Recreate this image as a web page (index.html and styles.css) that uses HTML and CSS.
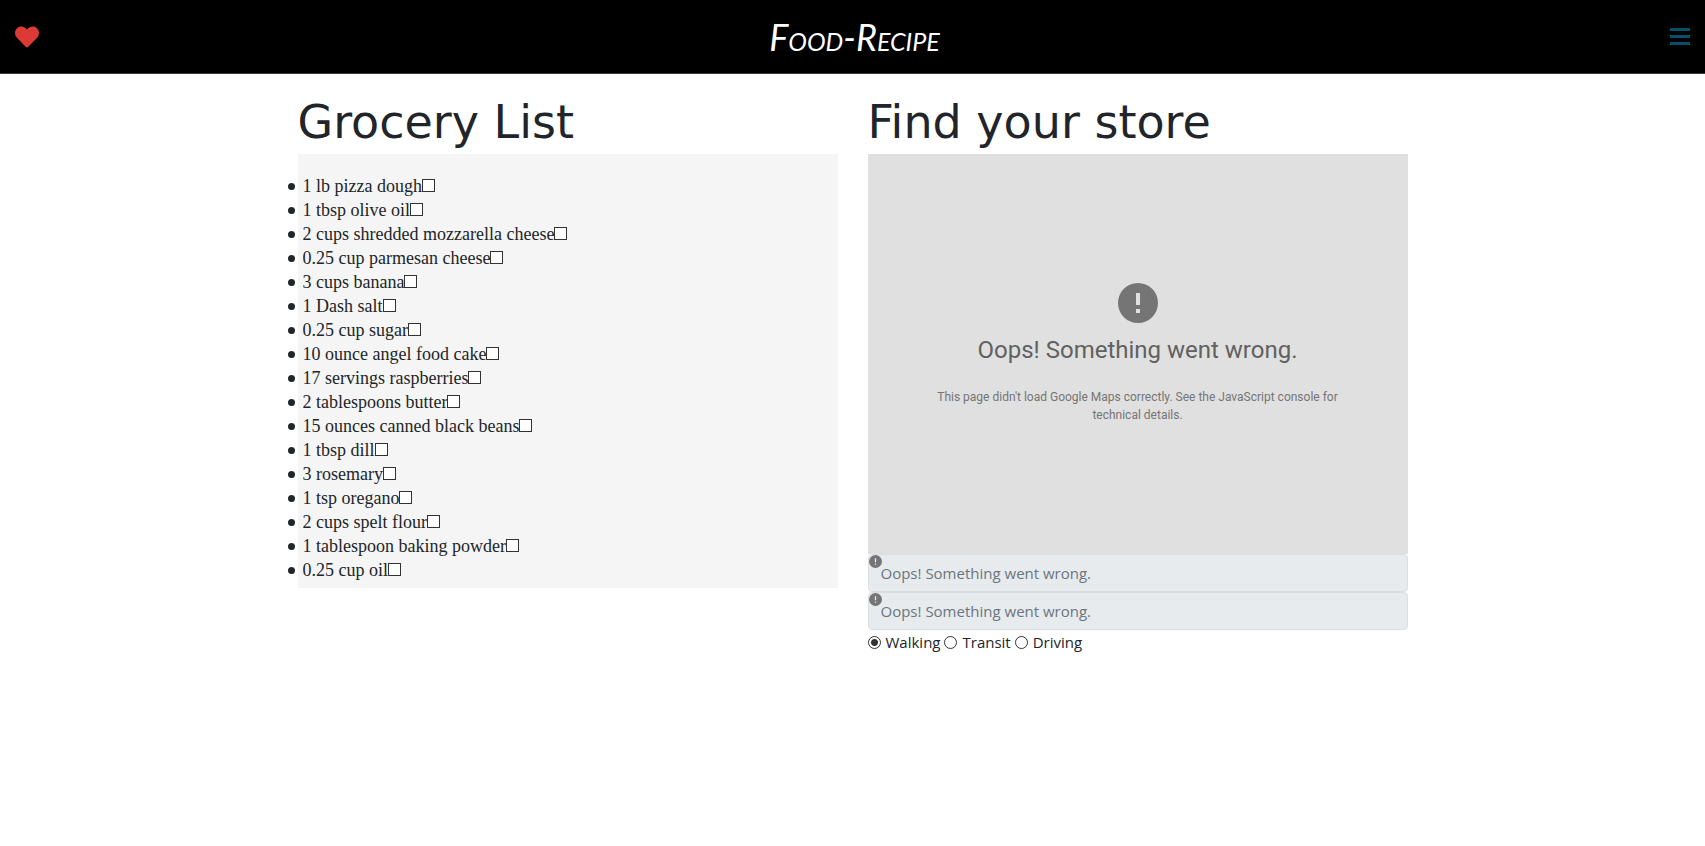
FILE: index.html
```
<!DOCTYPE html>
<html lang="en">
<head>
<meta charset="utf-8">
<meta name="viewport" content="width=device-width, initial-scale=1">
<title>Food-Recipe</title>
<link rel="stylesheet" href="styles.css">
</head>
<body>
<header class="navbar">
  <button class="icon-button" type="button" aria-label="Favorites">
    <svg class="heart" viewBox="0 0 512 512" aria-hidden="true"><path d="M462.3 62.6C407.5 15.9 326 24.3 275.7 76.2L256 96.5l-19.7-20.3C186.1 24.3 104.5 15.9 49.7 62.6c-62.8 53.6-66.1 149.8-9.9 207.9l193.5 199.8c12.5 12.9 32.8 12.9 45.3 0l193.5-199.8c56.3-58.1 53-154.3-9.8-207.9z"/></svg>
  </button>
  <a class="brand" href="#">Food-Recipe</a>
  <button class="icon-button" type="button" aria-label="Menu">
    <svg class="bars" viewBox="0 0 20 20" aria-hidden="true"><path d="M0 1h20v3H0zM0 8h20v3H0zM0 15h20v3H0z"/></svg>
  </button>
</header>
<main class="container">
  <section class="column">
    <h1 class="title">Grocery List</h1>
    <ul class="groceries">
      <li><label>1 lb pizza dough<input type="checkbox"></label></li>
      <li><label>1 tbsp olive oil<input type="checkbox"></label></li>
      <li><label>2 cups shredded mozzarella cheese<input type="checkbox"></label></li>
      <li><label>0.25 cup parmesan cheese<input type="checkbox"></label></li>
      <li><label>3 cups banana<input type="checkbox"></label></li>
      <li><label>1 Dash salt<input type="checkbox"></label></li>
      <li><label>0.25 cup sugar<input type="checkbox"></label></li>
      <li><label>10 ounce angel food cake<input type="checkbox"></label></li>
      <li><label>17 servings raspberries<input type="checkbox"></label></li>
      <li><label>2 tablespoons butter<input type="checkbox"></label></li>
      <li><label>15 ounces canned black beans<input type="checkbox"></label></li>
      <li><label>1 tbsp dill<input type="checkbox"></label></li>
      <li><label>3 rosemary<input type="checkbox"></label></li>
      <li><label>1 tsp oregano<input type="checkbox"></label></li>
      <li><label>2 cups spelt flour<input type="checkbox"></label></li>
      <li><label>1 tablespoon baking powder<input type="checkbox"></label></li>
      <li><label>0.25 cup oil<input type="checkbox"></label></li>
    </ul>
  </section>
  <section class="column">
    <h1 class="title">Find your store</h1>
    <div class="map">
      <svg class="map-icon" viewBox="0 0 40 40" aria-hidden="true"><path fill-rule="evenodd" d="M20 0a20 20 0 1 0 0 40a20 20 0 0 0 0-40zM18 10h4v12h-4zM18 26h4v4h-4z"/></svg>
      <div class="map-title">Oops! Something went wrong.</div>
      <div class="map-message">This page didn't load Google Maps correctly. See the JavaScript console for technical details.</div>
    </div>
    <div class="field">
      <input class="place" type="text" aria-label="Origin" placeholder="Oops! Something went wrong." disabled>
      <svg class="field-icon" viewBox="0 0 40 40" aria-hidden="true"><path fill-rule="evenodd" d="M20 0a20 20 0 1 0 0 40a20 20 0 0 0 0-40zM18 10h4v12h-4zM18 26h4v4h-4z"/></svg>
    </div>
    <div class="field">
      <input class="place" type="text" aria-label="Destination" placeholder="Oops! Something went wrong." disabled>
      <svg class="field-icon" viewBox="0 0 40 40" aria-hidden="true"><path fill-rule="evenodd" d="M20 0a20 20 0 1 0 0 40a20 20 0 0 0 0-40zM18 10h4v12h-4zM18 26h4v4h-4z"/></svg>
    </div>
    <div class="modes">
      <label><input type="radio" name="mode" checked>Walking</label>
      <label><input type="radio" name="mode">Transit</label>
      <label><input type="radio" name="mode">Driving</label>
    </div>
  </section>
</main>
</body>
</html>
```
FILE: styles.css
```
* { box-sizing: border-box; }
body {
  margin: 0;
  background: #fff;
  color: #212529;
  font: 15px/24px "Open Sans", sans-serif;
}
.navbar {
  display: flex;
  align-items: center;
  justify-content: space-between;
  min-height: 74px;
  padding: 0 15px;
  background: #000;
  border-bottom: 1px solid #343a40;
}
.icon-button {
  display: flex;
  padding: 0;
  border: 0;
  background: none;
}
.heart { width: 24px; height: 24px; fill: #dc3a35; }
.bars { width: 20px; height: 20px; fill: #07506a; }
.brand {
  color: #fff;
  font: italic small-caps 36px/40px Lato, cursive;
  text-decoration: none;
}
.container {
  display: grid;
  grid-template-columns: 1fr 1fr;
  gap: 30px;
  max-width: 1140px;
  margin: 0 auto;
  padding: 24px 15px;
}
.title {
  margin: 0 0 8px;
  font: 400 46px/48px "DejaVu Sans", sans-serif;
  white-space: nowrap;
}
.groceries {
  margin: 0;
  padding: 20px 5px 6px;
  background: #f5f5f5;
  font: 18px/24px "Liberation Serif", serif;
  list-style: none;
}
.groceries li {
  display: flex;
  align-items: center;
}
.groceries li::before {
  content: "";
  width: 7px;
  height: 7px;
  margin: 0 8px 0 -15px;
  border-radius: 50%;
  background: #212529;
}
input[type="checkbox"] {
  appearance: none;
  width: 13px;
  height: 13px;
  margin: 0;
  border: 1px solid #333;
  background: #fff;
}
.map {
  display: flex;
  flex-direction: column;
  align-items: center;
  height: 400px;
  padding-top: 129px;
  background: #e0e0e0;
  color: #757575;
  font-family: Roboto, sans-serif;
  text-align: center;
}
.map-icon { width: 40px; height: 40px; fill: #757575; }
.map-title {
  margin: 11px 0 22px;
  color: #616161;
  font-size: 24px;
  line-height: 32px;
}
.map-message {
  max-width: 420px;
  font-size: 12px;
  line-height: 18px;
}
.field { position: relative; }
.place {
  display: block;
  width: 100%;
  height: 38px;
  padding: 6px 12px;
  border: 1px solid #dbdfe4;
  border-radius: 4px;
  background: #e7ebee;
  font: inherit;
}
.place::placeholder { color: #6c757d; opacity: 1; }
.field-icon {
  position: absolute;
  top: 1px;
  left: 1px;
  width: 13px;
  height: 13px;
  fill: #757575;
}
.modes { display: flex; gap: 4px; }
.modes label { display: flex; align-items: center; gap: 5px; }
.modes input {
  appearance: none;
  width: 13px;
  height: 13px;
  margin: 0;
  border: 1px solid #333;
  border-radius: 50%;
  background: #fff;
}
.modes input:checked { background: radial-gradient(circle, #333 3px, #fff 4px); }
```
